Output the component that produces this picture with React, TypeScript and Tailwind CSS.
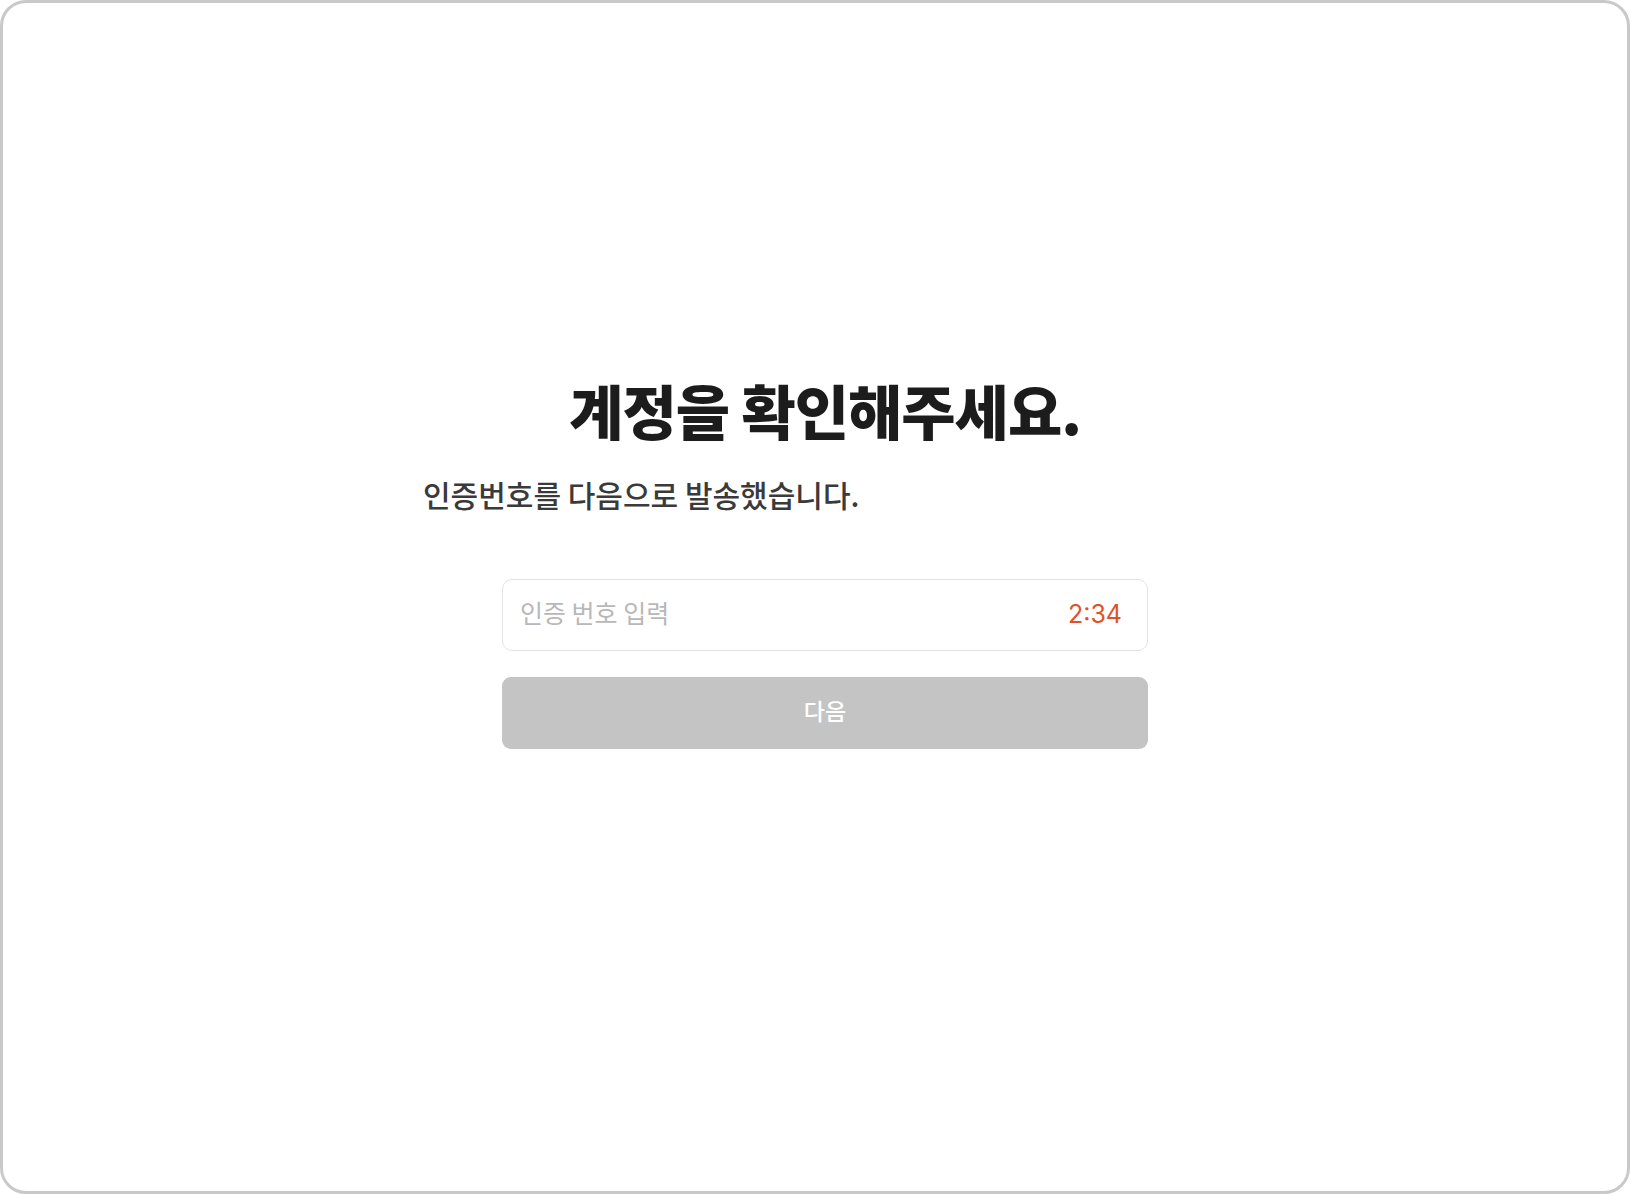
import { useState } from 'react';

const krFont = { fontFamily: '"Noto Sans CJK KR", "Noto Sans", sans-serif' };

export default function App() {
  const [code, setCode] = useState('');

  return (
    <div className="h-[1194px] w-full bg-white">
      <div className="flex h-full w-full flex-col items-center rounded-[26px] border-[3px] border-[#c9c9c9] bg-white pl-[20px] pt-[371px]" style={krFont}>
        <div className="flex w-[804px] flex-col">
          {/* Title */}
          <h1 className="text-center text-[59px] font-extrabold leading-[72px] tracking-[-1px] text-[#1c1c1c]">
            계정을 확인해주세요.
          </h1>

          {/* Subtitle */}
          <p className="mt-[28px] whitespace-nowrap text-[30px] font-medium leading-[40px] text-[#3a3a3a]">
            인증번호를 다음으로 발송했습니다.
          </p>

          {/* Code input */}
          <div className="mt-[65px] flex h-[72px] w-[646px] items-center self-center rounded-[10px] border border-[#e3e3e3] bg-white pl-[17px] pr-[25px]">
            <input
              value={code}
              onChange={(e) => setCode(e.target.value)}
              placeholder="인증 번호 입력"
              className="-mt-[6px] h-full flex-1 bg-transparent text-[25px] text-[#333] outline-none placeholder:text-[#b8b8b8]"
              style={krFont}
            />
            <span className="text-[25px] text-[#e0512a]" style={{ fontFamily: 'Inter, "Liberation Sans", sans-serif' }}>
              2:34
            </span>
          </div>

          {/* Next button */}
          <button
            disabled
            className="mt-[26px] h-[72px] w-[646px] self-center rounded-[9px] bg-[#c4c4c4] pb-[5px] text-[23px] font-medium text-white"
          >
            다음
          </button>
        </div>
      </div>
    </div>
  );
}
